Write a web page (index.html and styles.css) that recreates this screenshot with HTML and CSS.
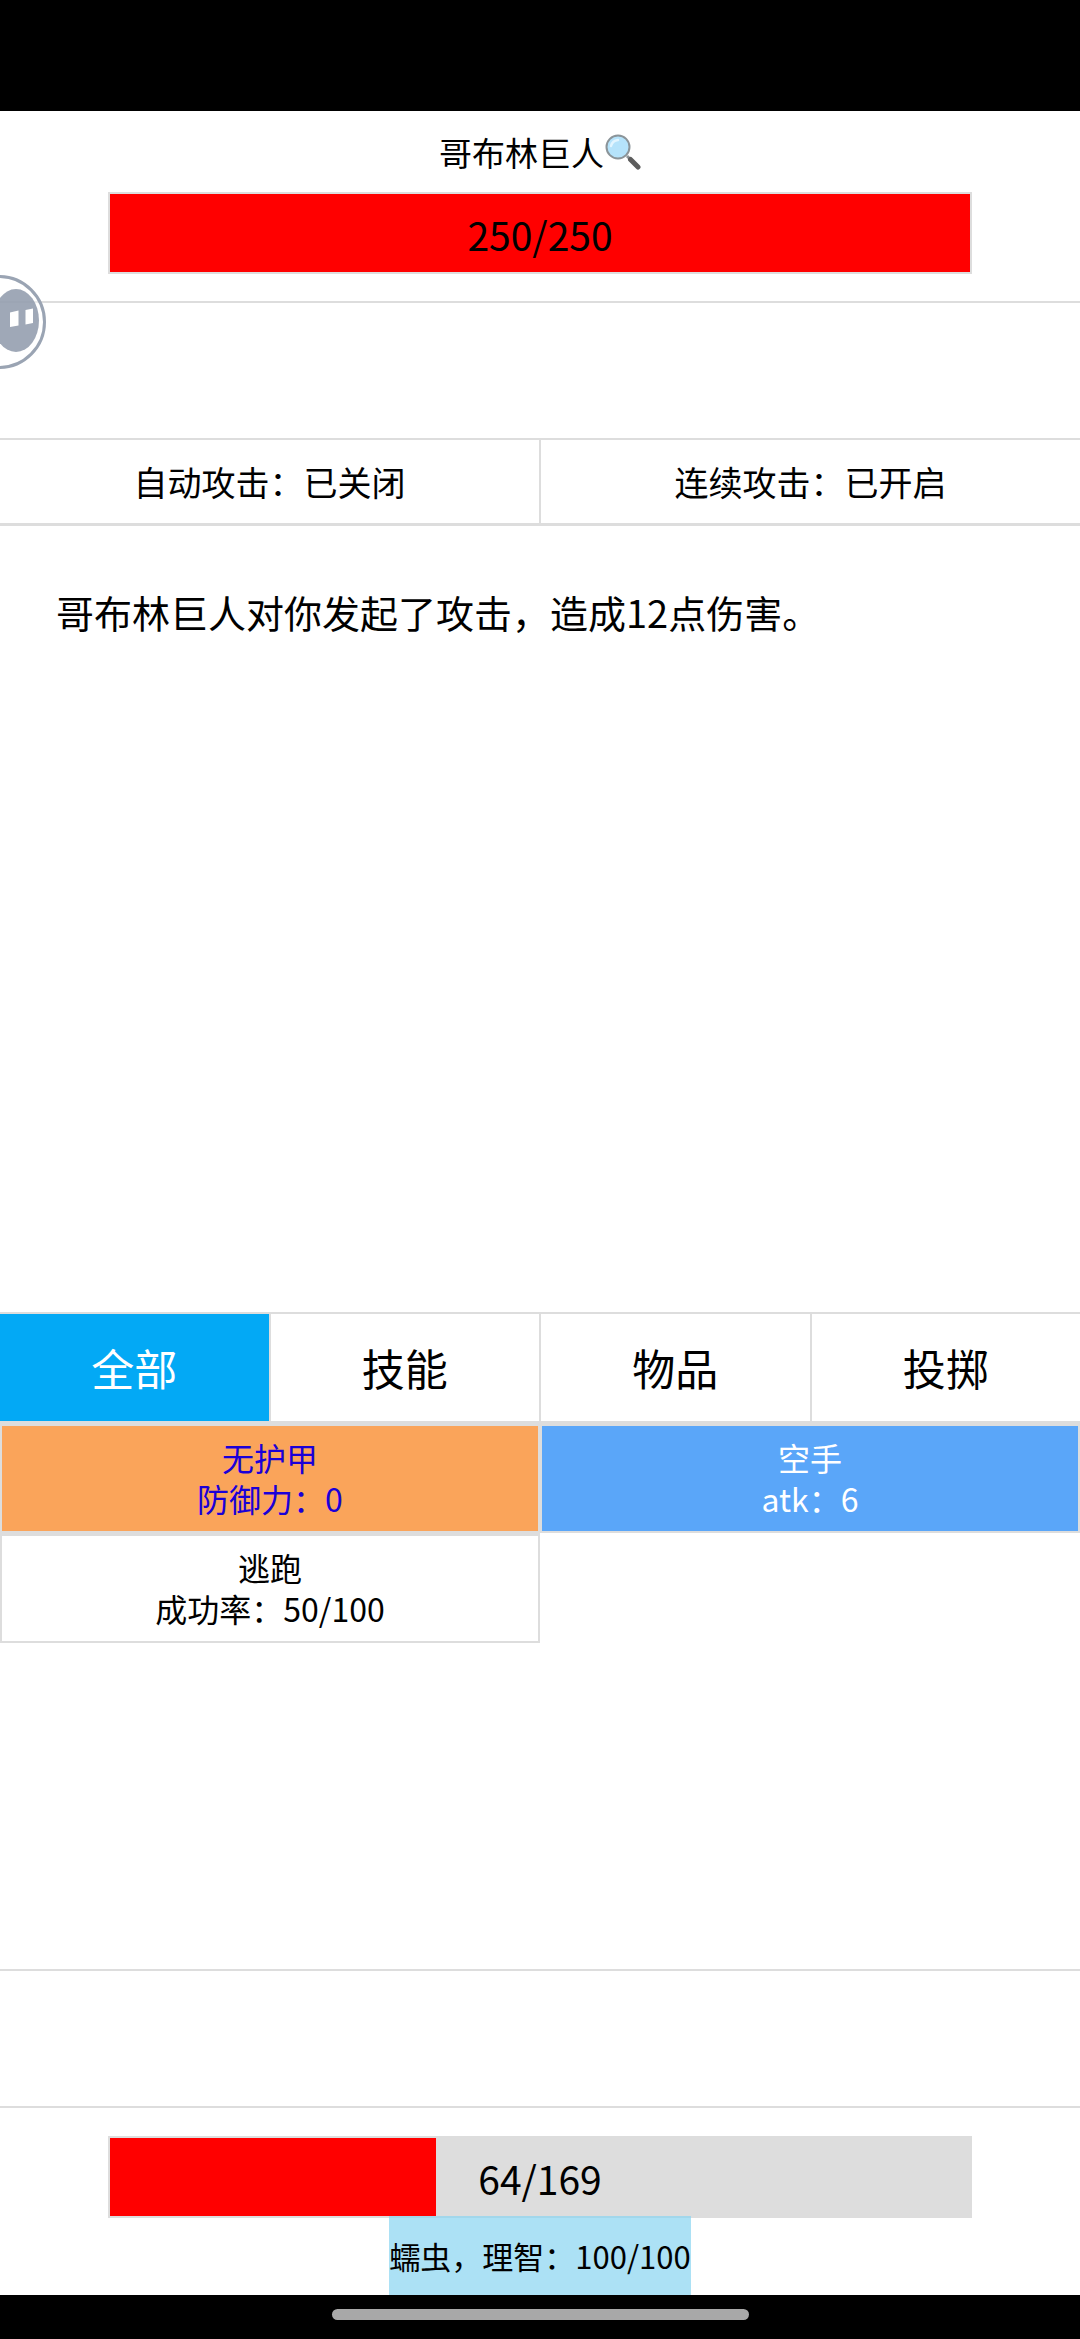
FILE: index.html
```html
<!DOCTYPE html>
<html lang="zh-Hans">
<head>
  <meta charset="UTF-8" />
  <meta name="viewport" content="width=device-width, initial-scale=1.0" />
  <title>战斗</title>
  <link rel="stylesheet" href="styles.css">
</head>
<body>

  <div class="status-bar"></div>

  <main class="battle">
    <section class="enemy">
      <button type="button" class="enemy-name">
        <span>哥布林巨人</span>
        <svg class="magnifier" viewBox="0 0 36 36" aria-hidden="true">
          <path d="M22 22l4 4" stroke="#8d9498" stroke-width="3" />
          <path d="M25.500 25.500L33 33" stroke="#5d5d5d" stroke-width="5" stroke-linecap="round" />
          <circle cx="13" cy="13" r="11.500" fill="#b5e3fb" stroke="#8b9499" stroke-width="2" />
          <path d="M6 12a8 8 0 0 1 7-6" fill="none" stroke="#e2f5ff" stroke-width="2.500" stroke-linecap="round" />
        </svg>
      </button>
      <div class="hp-bar">
        <div class="hp-fill" style="width: 100%"></div>
        <span class="hp-text">250/250</span>
      </div>
    </section>

    <section class="buffs"></section>

    <div class="toggles">
      <button type="button">自动攻击：已关闭</button>
      <button type="button">连续攻击：已开启</button>
    </div>

    <section class="log">
      <p>哥布林巨人对你发起了攻击，造成12点伤害。</p>
    </section>

    <nav class="tabs">
      <button type="button" class="active">全部</button>
      <button type="button">技能</button>
      <button type="button">物品</button>
      <button type="button">投掷</button>
    </nav>

    <section class="actions">
      <div class="action-grid">
        <button type="button" class="action armor">无护甲<br>防御力：0</button>
        <button type="button" class="action weapon">空手<br>atk：6</button>
        <button type="button" class="action">逃跑<br>成功率：50/100</button>
      </div>
    </section>

    <section class="buffs"></section>

    <section class="player">
      <div class="hp-bar">
        <div class="hp-fill" style="width: 37.87%"></div>
        <span class="hp-text">64/169</span>
      </div>
      <div class="sanity">蠕虫，理智：100/100</div>
    </section>
  </main>

  <div class="nav-bar"><span class="nav-handle"></span></div>

  <!-- 悬浮球 -->
  <button type="button" class="float-ball" aria-label="悬浮球">
    <svg viewBox="-48 0 96 96" aria-hidden="true">
      <circle cx="-1" cy="48" r="45.500" fill="#fff" fill-opacity="0.5" stroke="#9aa4b3" stroke-width="3" />
      <ellipse cx="16" cy="46.500" rx="23" ry="31.500" fill="#8792a5" fill-opacity="0.8" />
      <path d="M10 38.500l8.500-2v15l-8.500 1.500zM25.500 36l7.500-1.500v14.500l-7.500 1.500z" fill="#fff" />
    </svg>
  </button>

</body>
</html>
```

FILE: styles.css
```css
* {
  box-sizing: border-box;
}

body {
  margin: 0;
  min-height: 100vh;
  display: flex;
  flex-direction: column;
  position: relative;
  overflow-x: hidden;
  background-color: #fff;
  color: #000;
  font-family: "Noto Sans CJK SC", sans-serif;
}

button {
  margin: 0;
  padding: 0;
  border: none;
  background: none;
  color: inherit;
  font: inherit;
  cursor: pointer;
}

.status-bar {
  height: 111px;
  background-color: #000;
}

.battle {
  flex: 1;
  display: flex;
  flex-direction: column;
}

.enemy {
  display: flex;
  flex-direction: column;
  align-items: center;
  padding-bottom: 27px;
  border-bottom: 2px solid #ddd;
}

.enemy-name {
  display: flex;
  align-items: center;
  gap: 1px;
  height: 81px;
  font-size: 33px;
}

.magnifier {
  width: 36px;
  height: 36px;
}

.hp-bar {
  position: relative;
  width: 80%;
  height: 82px;
  border: 2px solid #ddd;
  background-color: #ddd;
  text-align: center;
}

.hp-fill {
  position: absolute;
  top: 0;
  left: 0;
  height: 100%;
  background-color: #f00;
}

.hp-text {
  position: relative;
  font-size: 39px;
  line-height: 80px;
}

.buffs {
  height: 135px;
}

.toggles {
  display: flex;
  border-top: 2px solid #ddd;
  border-bottom: 3px solid #ddd;
}

.toggles button {
  flex: 1;
  height: 83px;
  font-size: 34px;
}

.toggles button + button,
.tabs button + button {
  border-left: 2px solid #ddd;
}

.log {
  flex: 785 1 0;
}

.log p {
  margin: 0;
  padding: 58px 56px;
  font-size: 38px;
  line-height: 56px;
}

.tabs {
  display: flex;
  border-top: 2px solid #ddd;
  border-bottom: 2px solid #ddd;
}

.tabs button {
  flex: 1;
  height: 107px;
  font-size: 43px;
}

.tabs .active {
  background-color: #03a9f5;
  color: #fff;
}

.actions {
  flex: 546 1 0;
  border-bottom: 2px solid #ddd;
}

.action-grid {
  display: grid;
  grid-template-columns: 1fr 1fr;
}

.action {
  height: 110px;
  border: 2px solid #ddd;
  border-top-width: 3px;
  font-size: 32px;
  line-height: 41px;
}

.armor {
  background-color: #faa45a;
  color: #1a00d8;
}

.weapon {
  background-color: #5aa6f9;
  color: #fff;
}

.player {
  display: flex;
  flex-direction: column;
  align-items: center;
  padding-top: 28px;
  border-top: 2px solid #ddd;
}

.sanity {
  position: relative;
  height: 79px;
  margin-top: -2px;
  background-color: rgba(137, 212, 241, 0.7);
  font-size: 31px;
  line-height: 79px;
}

.nav-bar {
  display: flex;
  justify-content: center;
  align-items: center;
  height: 44px;
  padding-bottom: 6px;
  background-color: #000;
}

.nav-handle {
  width: 417px;
  height: 11px;
  border-radius: 6px;
  background-color: #a8a8a8;
}

.float-ball {
  position: absolute;
  top: 274px;
  left: -48px;
  width: 96px;
  height: 96px;
}

.float-ball svg {
  display: block;
}
```
